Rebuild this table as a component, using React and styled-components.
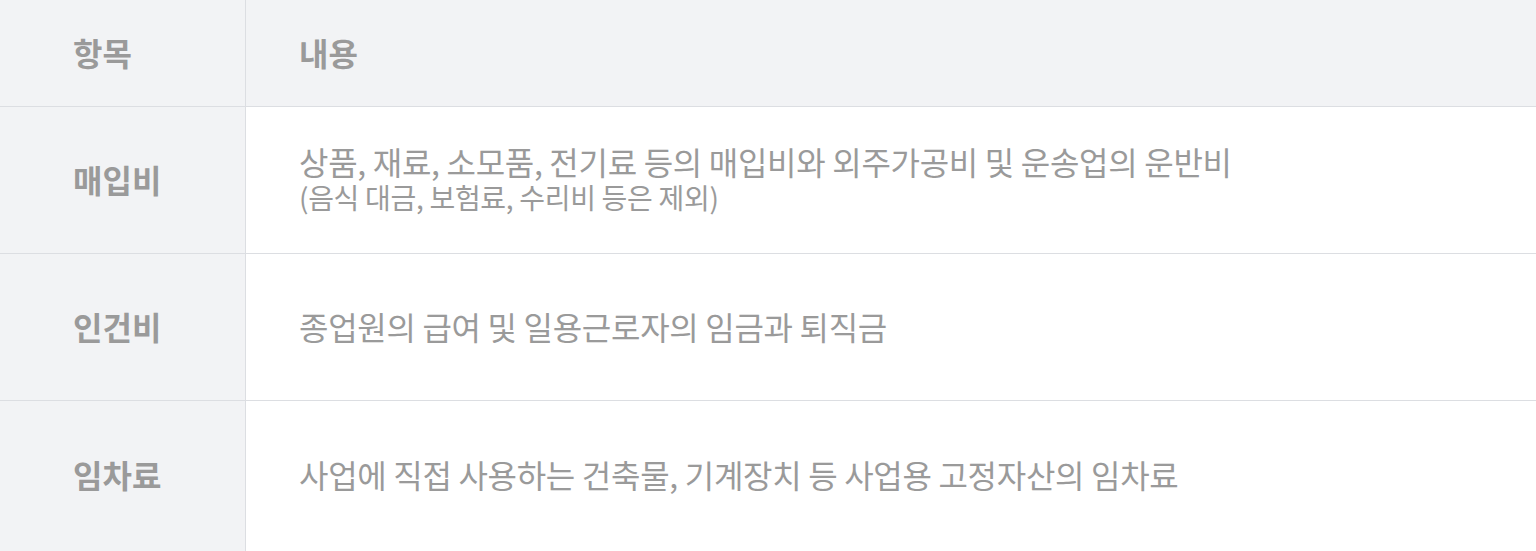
import React from 'react';
import styled, { createGlobalStyle } from 'styled-components';

const GlobalStyle = createGlobalStyle`
  html, body {
    margin: 0;
    padding: 0;
    background: #ffffff;
    overflow: hidden;
  }
  body {
    font-family: "Noto Sans CJK KR", "Noto Sans", sans-serif;
  }
`;

const Table = styled.div`
  display: grid;
  grid-template-columns: 246px 1fr;
  width: 1536px;
  color: #9a9a9a;
`;

const Cell = styled.div`
  display: flex;
  flex-direction: column;
  justify-content: center;
  height: ${(p) => p.$height}px;
  box-sizing: border-box;
  border-bottom: ${(p) => (p.$last ? 'none' : '1px solid #dcdee2')};
  padding-bottom: ${(p) => (p.$last ? 6 : 2)}px;
  background: ${(p) => (p.$shaded ? '#f2f3f5' : '#ffffff')};
  ${(p) => p.$label && 'border-right: 1px solid #dcdee2;'}
  padding-left: ${(p) => (p.$label ? 73 : 53)}px;
`;

const HeadText = styled.span`
  font-size: 32px;
  font-weight: 700;
`;

const Label = styled.span`
  font-size: 32px;
  font-weight: 700;
`;

const Main = styled.span`
  font-size: 32px;
  font-weight: 400;
  letter-spacing: -0.3px;
  line-height: 36px;
`;

const Sub = styled.span`
  font-size: 28px;
  font-weight: 400;
  letter-spacing: -0.3px;
  line-height: 36px;
`;

const rows = [
  {
    label: '매입비',
    main: '상품, 재료, 소모품, 전기료 등의 매입비와 외주가공비 및 운송업의 운반비',
    sub: '(음식 대금, 보험료, 수리비 등은 제외)',
  },
  { label: '인건비', main: '종업원의 급여 및 일용근로자의 임금과 퇴직금' },
  { label: '임차료', main: '사업에 직접 사용하는 건축물, 기계장치 등 사업용 고정자산의 임차료' },
];

export default function App() {
  return (
    <>
      <GlobalStyle />
      <Table>
        <Cell $label $shaded $height={107}>
          <HeadText>항목</HeadText>
        </Cell>
        <Cell $shaded $height={107}>
          <HeadText>내용</HeadText>
        </Cell>
        {rows.map((r, i) => {
          const last = i === rows.length - 1;
          return (
            <React.Fragment key={r.label}>
              <Cell $label $shaded $last={last} $height={last ? 151 : 147}>
                <Label>{r.label}</Label>
              </Cell>
              <Cell $last={last} $height={last ? 151 : 147}>
                <Main>{r.main}</Main>
                {r.sub && <Sub>{r.sub}</Sub>}
              </Cell>
            </React.Fragment>
          );
        })}
      </Table>
    </>
  );
}
